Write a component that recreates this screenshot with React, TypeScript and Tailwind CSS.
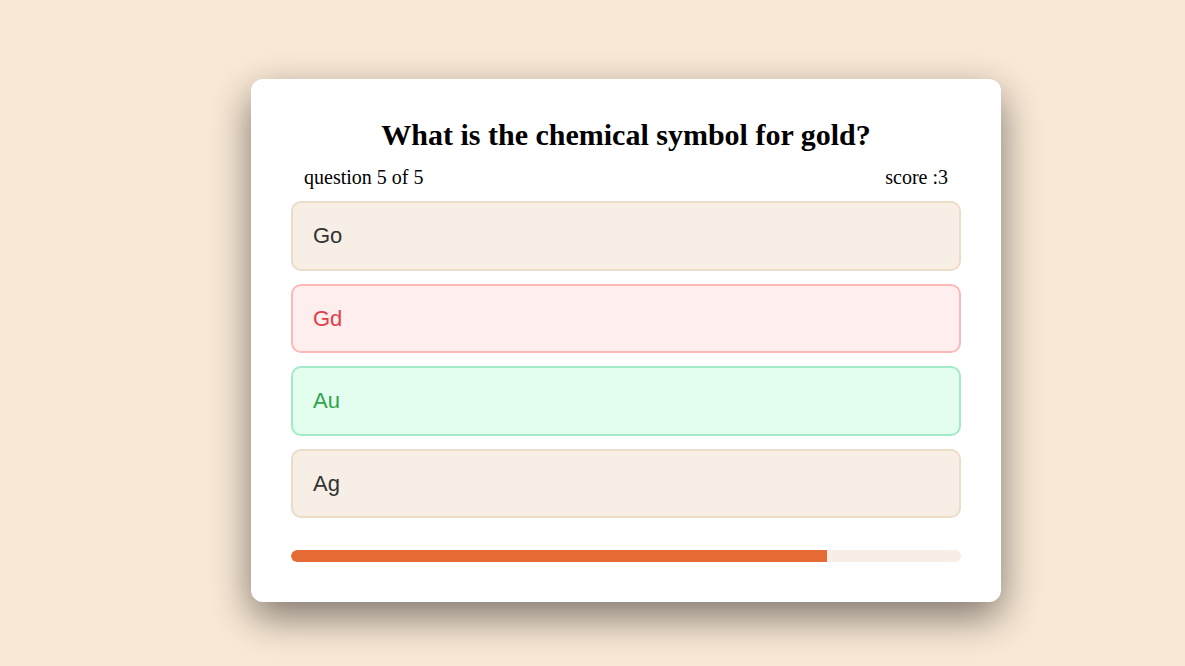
import { useState } from 'react';

const options = [
  { id: 1, label: 'Go', state: 'idle' },
  { id: 2, label: 'Gd', state: 'wrong' },
  { id: 3, label: 'Au', state: 'correct' },
  { id: 4, label: 'Ag', state: 'idle' },
];

const optionStyles: Record<string, string> = {
  idle: 'bg-[#f7efe5] border-[#ecdcc8] text-[#333333]',
  wrong: 'bg-[#ffeeee] border-[#ffb8b8] text-[#e0404a]',
  correct: 'bg-[#e3fdef] border-[#a3ebc7] text-[#2fa44a]',
};

export default function App() {
  const [progress] = useState(80);

  return (
    <div className="min-h-[666px] bg-[#fae9d6] pt-[79px] pl-[251px]">
      {/* Tarjeta del quiz */}
      <div className="w-[750px] bg-white rounded-xl px-10 pt-[38px] pb-10 shadow-[0_15px_40px_rgba(0,0,0,0.5)] font-['Liberation_Serif',serif]">
        <h2 className="text-center font-bold text-[30px] leading-9 text-black">
          What is the chemical symbol for gold?
        </h2>
        <div className="flex justify-between px-[13px] mt-3 text-[20px] leading-6 text-black">
          <span>question 5 of 5</span>
          <span>score :3</span>
        </div>

        {/* Opciones */}
        <div className="flex flex-col gap-[13px] mt-3">
          {options.map(opt => (
            <button
              key={opt.id}
              className={`h-[69.5px] w-full text-left px-[20px] border-2 rounded-[10px] text-[22px] font-['Liberation_Sans',sans-serif] ${optionStyles[opt.state]}`}
            >
              {opt.label}
            </button>
          ))}
        </div>

        {/* Barra de progreso */}
        <div className="mt-[32px] h-3 w-full bg-[#f7efe5] rounded-full overflow-hidden">
          <div className="h-full bg-[#e56a33] rounded-l-full" style={{ width: `${progress}%` }} />
        </div>
      </div>
    </div>
  );
}
